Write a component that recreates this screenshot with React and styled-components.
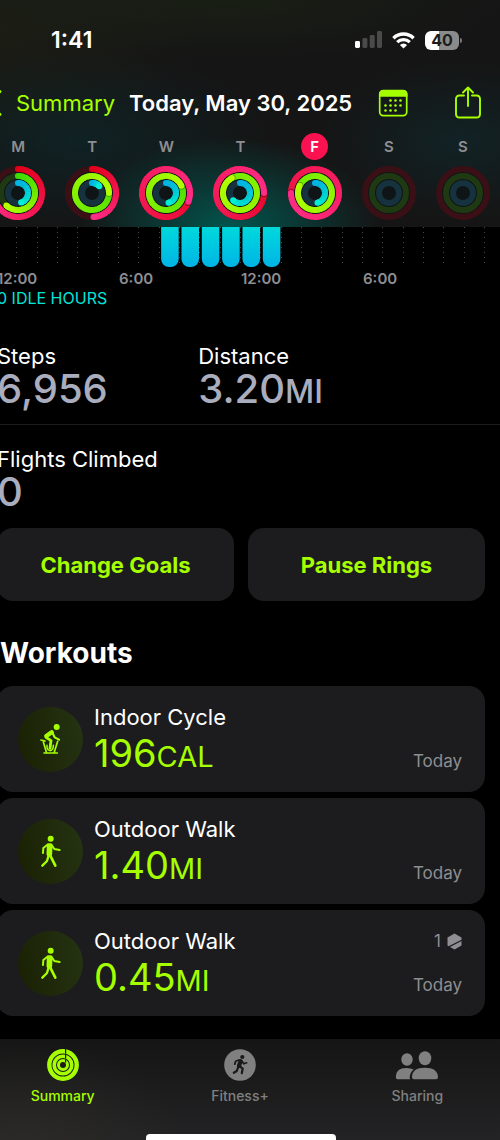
import React from "react";
import styled, { createGlobalStyle } from "styled-components";

const LIME = "#a6ff00";
const GREY = "#8e8e93";

const GlobalStyle = createGlobalStyle`
  *, *::before, *::after { box-sizing: border-box; }
  body {
    margin: 0;
    background: #000;
    color: #fff;
    font-family: Inter, "Liberation Sans", sans-serif;
  }
  button { font: inherit; border: 0; padding: 0; background: none; color: inherit; cursor: pointer; }
  a { color: inherit; text-decoration: none; }
  h1, h2, h3, p, ul, dl, dd { margin: 0; padding: 0; }
  ul { list-style: none; }
  svg { display: block; flex: none; }
`;

const Page = styled.div`
  min-height: 100vh;
  display: flex;
  flex-direction: column;
  overflow: hidden;
`;

const Header = styled.header`
  background:
    radial-gradient(ellipse 150px 90px at 46% 100%, rgba(0, 92, 84, 0.9), rgba(0, 92, 84, 0.4) 55%, transparent),
    radial-gradient(ellipse 190px 90px at 16% 62%, rgba(12, 42, 46, 0.6), transparent),
    radial-gradient(ellipse 140px 80px at 92% 62%, rgba(16, 40, 44, 0.7), transparent),
    radial-gradient(ellipse 280px 60px at 45% 0%, rgba(28, 40, 20, 0.5), transparent),
    radial-gradient(ellipse 200px 120px at 0% 15%, rgba(30, 32, 20, 0.7), transparent),
    #151515;
`;

const StatusBar = styled.div`
  height: 80px;
  display: flex;
  align-items: center;
  justify-content: space-between;
  padding: 0 41px 0 51px;
`;

const Time = styled.time`
  font-size: 23px;
  font-weight: 600;
`;

const StatusIcons = styled.div`
  display: flex;
  align-items: center;
  gap: 10px;
`;

const Battery = styled.div`
  position: relative;
  width: 34px;
  height: 19px;
  border-radius: 6px;
  background: linear-gradient(90deg, #fff 41%, #8b8b8b 41%);
  color: #1c1c1c;
  font-size: 16px;
  font-weight: 700;
  line-height: 19px;
  text-align: center;

  &::after {
    content: "";
    position: absolute;
    left: 35px;
    top: 7px;
    width: 2px;
    height: 5px;
    border-radius: 0 2px 2px 0;
    background: #777;
  }
`;

const NavBar = styled.nav`
  height: 46px;
  display: flex;
  align-items: center;
  padding-right: 18px;
`;

const BackLink = styled.a`
  display: flex;
  align-items: center;
  gap: 14px;
  margin-left: -13px;
  color: ${LIME};
  font-size: 22px;
`;

const Title = styled.h1`
  margin-left: 14px;
  font-size: 22px;
  font-weight: 600;
  white-space: nowrap;
`;

const IconButton = styled.button`
  color: ${LIME};
  margin-left: ${(p) => (p.$push ? "auto" : "26px")};
`;

const Week = styled.ul`
  display: grid;
  grid-template-columns: repeat(7, 1fr);
  margin-left: -19px;
  padding: 7px 0;
`;

const Day = styled.li`
  display: flex;
  flex-direction: column;
  align-items: center;
  gap: 6px;
`;

const DayLetter = styled.span`
  width: 27px;
  height: 27px;
  border-radius: 50%;
  line-height: 27px;
  text-align: center;
  font-size: 15px;
  font-weight: 600;
  color: ${(p) => (p.$today ? "#fff" : GREY)};
  background: ${(p) => (p.$today ? "#fa114f" : "transparent")};
`;

const Content = styled.main`
  margin-left: -3px;
  padding-right: 15px;
`;

const HourLabels = styled.div`
  display: grid;
  grid-template-columns: repeat(4, 1fr);
  font-size: 15px;
  font-weight: 600;
  line-height: 22px;
  color: ${GREY};
`;

const IdleHours = styled.p`
  font-size: 16px;
  line-height: 16px;
  color: #00e5d8;
`;

const Stats = styled.dl`
  display: grid;
  grid-template-columns: 40% 1fr;
  padding: ${(p) => (p.$divided ? "37px 0 15px" : "21px 0 16px")};
  border-bottom: ${(p) => (p.$divided ? "1px solid #1c1c1e" : "0")};
  margin-right: ${(p) => (p.$divided ? "-15px" : "0")};
`;

const StatLabel = styled.dt`
  font-size: 22px;
  line-height: 26px;
`;

const StatValue = styled.dd`
  font-size: 40px;
  font-weight: 500;
  line-height: 40px;
  color: #a9adbd;
`;

const StatUnit = styled.span`
  font-size: 32px;
  line-height: 20px;
`;

const Actions = styled.div`
  display: grid;
  grid-template-columns: 1fr 1fr;
  gap: 14px;
`;

const ActionButton = styled.button`
  height: 73px;
  border-radius: 16px;
  background: #1c1c1e;
  color: ${LIME};
  font-size: 22px;
  font-weight: 700;
`;

const SectionTitle = styled.h2`
  margin: 34px 0 15px 3px;
  font-size: 28px;
  font-weight: 700;
  line-height: 36px;
`;

const WorkoutList = styled.ul`
  display: grid;
  gap: 6px;
`;

const WorkoutCard = styled.a`
  height: 106px;
  display: flex;
  align-items: center;
  gap: 11px;
  padding: 0 23px 0 21px;
  border-radius: 16px;
  background: #1c1c1e;
`;

const WorkoutIcon = styled.span`
  width: 65px;
  height: 65px;
  flex: none;
  display: grid;
  place-items: center;
  border-radius: 50%;
  background: linear-gradient(80deg, #1a2003, #253413);
  color: ${LIME};
`;

const WorkoutText = styled.div`
  flex: 1;
`;

const WorkoutName = styled.h3`
  font-size: 22px;
  font-weight: 400;
  line-height: 28px;
`;

const WorkoutValue = styled.p`
  font-size: 38px;
  line-height: 44px;
  color: ${LIME};
`;

const WorkoutUnit = styled.span`
  font-size: 29px;
  line-height: 20px;
`;

const WorkoutMeta = styled.div`
  height: 64px;
  display: flex;
  flex-direction: column;
  align-items: flex-end;
  justify-content: space-between;
  font-size: 17px;
  line-height: 20px;
  color: ${GREY};
`;

const Award = styled.span`
  display: flex;
  align-items: center;
  gap: 6px;
`;

const TabBar = styled.footer`
  margin-top: 23px;
  padding-top: 10px;
  background:
    radial-gradient(ellipse 160px 100px at 5% 100%, rgba(48, 46, 40, 0.6), transparent),
    linear-gradient(#151515, #232325);
`;

const Tabs = styled.nav`
  display: grid;
  grid-template-columns: repeat(3, 1fr);
  margin: 0 -6px 30px -26px;
`;

const Tab = styled.a`
  display: flex;
  flex-direction: column;
  align-items: center;
  gap: 7px;
  font-size: 14px;
  font-weight: 500;
  line-height: 16px;
  color: ${(p) => (p.$active ? LIME : "#808080")};
`;

const IndicatorArea = styled.div`
  padding-right: 18px;
`;

const HomeIndicator = styled.div`
  width: 190px;
  height: 6px;
  margin: 0 auto;
  border-radius: 4px 4px 0 0;
  background: #fff;
`;

const RING_TYPES = [
  { radius: 24, from: [226, 0, 24], to: [255, 45, 135], track: "#3a1016" },
  { radius: 17, from: [60, 220, 0], to: [180, 255, 0], track: "#1f3a12" },
  { radius: 10, from: [0, 180, 228], to: [0, 240, 215], track: "#15323e" },
];

const pointAt = (radius, turn) => {
  const a = turn * 2 * Math.PI;
  return [27 + radius * Math.sin(a), 27 - radius * Math.cos(a)];
};

const mix = (from, to, t) =>
  `rgb(${from.map((c, i) => Math.round(c + (to[i] - c) * t)).join(",")})`;

function Ring({ type, value }) {
  const { radius, from, to, track } = type;
  const start = Math.max(0, value - 1);
  const steps = 48;
  const arcs = [];
  for (let i = 0; i < steps && value > 0; i += 1) {
    const a = start + ((value - start) * i) / steps;
    const b = start + ((value - start) * (i + 1)) / steps;
    const [x1, y1] = pointAt(radius, a);
    const [x2, y2] = pointAt(radius, b + (i < steps - 1 ? 0.006 : 0));
    arcs.push(
      <path
        key={i}
        d={`M${x1} ${y1}A${radius} ${radius} 0 0 1 ${x2} ${y2}`}
        stroke={mix(from, to, b / value)}
        strokeWidth="6"
        fill="none"
      />
    );
  }
  const [hx, hy] = pointAt(radius, value);
  const [sx, sy] = pointAt(radius, value + 0.008);
  return (
    <g>
      <circle cx="27" cy="27" r={radius} stroke={track} strokeWidth="6" fill="none" />
      {value > 0 && value < 1 && <circle cx="27" cy={27 - radius} r="3" fill={mix(from, to, 0)} />}
      {arcs}
      {value > 1 && <circle cx={sx} cy={sy} r="3" fill="rgba(0,0,0,0.35)" />}
      {value > 0 && <circle cx={hx} cy={hy} r="3" fill={mix(from, to, 1)} />}
    </g>
  );
}

function Rings({ values }) {
  return (
    <svg width="54" height="54" viewBox="0 0 54 54" overflow="visible" aria-hidden="true">
      <circle cx="27" cy="27" r="26" fill="#0f1516" />
      {RING_TYPES.map((type, i) => (
        <Ring key={type.radius} type={type} value={values[i]} />
      ))}
    </svg>
  );
}

function HourChart() {
  const slot = 100 / 24;
  return (
    <svg width="100%" height="41" role="img" aria-label="Stand hours">
      <defs>
        <linearGradient id="stand" x1="0" y1="0" x2="0" y2="1">
          <stop offset="0.35" stopColor="#00d8dc" />
          <stop offset="1" stopColor="#00b4e6" />
        </linearGradient>
      </defs>
      {Array.from({ length: 24 }, (_, i) => (
        <line
          key={i}
          x1={`${(i + 1) * slot - 0.1}%`}
          x2={`${(i + 1) * slot - 0.1}%`}
          y1="0"
          y2="38"
          stroke="#48484a"
          strokeDasharray="1 4"
          shapeRendering="crispEdges"
        />
      ))}
      {[8, 9, 10, 11, 12, 13].map((h) => (
        <rect key={h} x={`${h * slot + 0.3}%`} y="-20" width="3.6%" height="60" rx="8" fill="url(#stand)" />
      ))}
    </svg>
  );
}

const SignalIcon = () => (
  <svg width="27" height="18" viewBox="0 0 27 18" aria-hidden="true">
    <rect x="0" y="10" width="5" height="7" rx="1.4" fill="#fff" />
    <rect x="7.4" y="7" width="5" height="10" rx="1.4" fill="#4a4a4a" />
    <rect x="14.7" y="4" width="5" height="13" rx="1.4" fill="#4a4a4a" />
    <rect x="22" y="0" width="5" height="17" rx="1.4" fill="#4a4a4a" />
  </svg>
);

const WifiIcon = () => (
  <svg width="23" height="17" viewBox="0 0 23 17" fill="none" stroke="#fff" aria-hidden="true">
    <path d="M1.4 6.2a14.4 14.4 0 0 1 20.2 0" strokeWidth="3.4" />
    <path d="M5.2 10.2a9 9 0 0 1 12.6 0" strokeWidth="3.2" />
    <path d="M11.5 16.6 7.9 13a5 5 0 0 1 7.2 0Z" fill="#fff" stroke="none" />
  </svg>
);

const ChevronIcon = () => (
  <svg width="15" height="28" viewBox="0 0 15 28" fill="none" stroke="currentColor" strokeWidth="2.8" strokeLinecap="round" strokeLinejoin="round" aria-hidden="true">
    <path d="M13 2.5 1.8 14 13 25.5" />
  </svg>
);

const CALENDAR_DOTS = [
  [12.5, 11.5], [17.5, 11.5], [22.5, 11.5],
  [7.5, 16.5], [12.5, 16.5], [17.5, 16.5], [22.5, 16.5],
  [7.5, 21.5], [12.5, 21.5], [17.5, 21.5],
];

const CalendarIcon = () => (
  <svg width="30" height="28" viewBox="0 0 30 28" aria-hidden="true">
    <rect x="1.7" y="1.7" width="27" height="25" rx="3.6" fill="none" stroke="currentColor" strokeWidth="1.7" />
    <path d="M1 5.2Q1 1 5.2 1h20Q29.4 1 29.4 5.2V7.8H1Z" fill="currentColor" />
    {CALENDAR_DOTS.map(([x, y]) => (
      <circle key={`${x}-${y}`} cx={x} cy={y} r="1.3" fill="currentColor" />
    ))}
  </svg>
);

const ShareIcon = () => (
  <svg width="28" height="34" viewBox="0 0 28 34" fill="none" stroke="currentColor" strokeWidth="1.9" strokeLinecap="round" strokeLinejoin="round" aria-hidden="true">
    <path d="M10 9.5H5.5Q2 9.500 2 13v15q0 3.500 3.500 3.500h17Q26 31.500 26 28V13q0-3.500-3.500-3.500H18" />
    <path d="M14 20V1.500M9 6.500l5-5 5 5" />
  </svg>
);

const CycleIcon = () => (
  <svg width="22" height="32" viewBox="118 127 66 96" fill="none" stroke="currentColor" strokeLinecap="round" strokeLinejoin="round" aria-hidden="true">
    <circle cx="168" cy="139" r="9" fill="currentColor" stroke="none" />
    <path d="M153 155 137 166" strokeWidth="13" />
    <path d="M136 170 151 180 148 203" strokeWidth="8.5" />
    <path d="M155 155 162 170 175 177" strokeWidth="6.5" />
    <path d="M121 178 133 181M128 184 137 214M171 182 161 214M130 217H170" strokeWidth="5" />
    <path d="M139 194Q138 209 149 210Q158 209 158 194" strokeWidth="4.5" />
  </svg>
);

const WalkIcon = () => (
  <svg width="22" height="33" viewBox="121 462 66 99" fill="none" stroke="currentColor" strokeLinecap="round" strokeLinejoin="round" aria-hidden="true">
    <circle cx="153" cy="473" r="9" fill="currentColor" stroke="none" />
    <path d="M150 495 149 518" strokeWidth="17" />
    <path d="M145 490 131 501 130 516" strokeWidth="6" />
    <path d="M155 491 164 504 180 507" strokeWidth="6" />
    <path d="M150 520 167 554" strokeWidth="8" />
    <path d="M146 526 142 540 128 554" strokeWidth="7" />
  </svg>
);

const AwardIcon = () => (
  <svg width="15" height="17" viewBox="0 0 15 17" fill="currentColor" aria-hidden="true">
    <path d="M7.5 0.5 14.5 4.5V6.8L1.6 13.2 0.5 12.5V4.5ZM14.5 8V12.5L7.5 16.5 3 14Z" />
  </svg>
);

const SummaryIcon = () => (
  <svg width="32" height="32" viewBox="0 0 32 32" fill="none" stroke="currentColor" aria-hidden="true">
    <circle cx="16" cy="16" r="13.7" strokeWidth="4.4" />
    <circle cx="16" cy="16" r="8.8" strokeWidth="3.6" />
    <circle cx="16" cy="16" r="4.5" strokeWidth="3" />
    <path d="M18.6 0V4.800M18.6 5.600V9.400M18.6 10.600V13.600" stroke="#1b1b1b" strokeWidth="1.2" />
  </svg>
);

const FitnessIcon = () => (
  <svg width="32" height="32" viewBox="0 0 32 32" fill="none" aria-hidden="true">
    <circle cx="16" cy="16" r="15.8" fill="currentColor" />
    <g stroke="#191919" strokeLinecap="round" strokeLinejoin="round">
      <circle cx="18.3" cy="8" r="2.1" fill="#191919" stroke="none" />
      <path d="M16.6 12.2 15 16.8" strokeWidth="4.2" />
      <path d="M14.8 11 11.6 12.2 10.8 15.2" strokeWidth="1.7" />
      <path d="M18 12.2 19.8 14.8 22.6 13.8" strokeWidth="1.7" />
      <path d="M15.8 17.4 18.7 19.6 17.8 24.2" strokeWidth="2.2" />
      <path d="M14 18.5 12.8 22 9.8 23.8" strokeWidth="2.2" />
    </g>
  </svg>
);

const SharingIcon = () => (
  <svg width="44" height="32" viewBox="0 0 44 32" fill="currentColor" aria-hidden="true">
    <ellipse cx="12" cy="10.5" rx="5.7" ry="6.2" />
    <ellipse cx="30" cy="9.3" rx="6.3" ry="7" />
    <path d="M0.8 28Q0.8 19 11.5 19Q15.8 19 18.6 20.6Q14.7 24 14.7 28.5Q14.7 29.8 15.2 30.3H2.6Q0.8 30.3 0.8 28Z" />
    <path d="M17 28Q17.2 18.7 29.8 18.7Q42.5 18.7 43 28Q43 30.3 41 30.3H19Q17 30.3 17 28Z" />
  </svg>
);

const DAYS = [
  { letter: "M", values: [0.72, 0.62, 0.45] },
  { letter: "T", values: [0.49, 1.25, 0.13] },
  { letter: "W", values: [1.31, 1.18, 0.46] },
  { letter: "T", values: [1.25, 1.92, 0.62] },
  { letter: "F", values: [1.75, 1.82, 0.46], today: true },
  { letter: "S", values: [0, 0, 0] },
  { letter: "S", values: [0, 0, 0] },
];

const WORKOUTS = [
  { name: "Indoor Cycle", value: "196", unit: "CAL", Icon: CycleIcon },
  { name: "Outdoor Walk", value: "1.40", unit: "MI", Icon: WalkIcon },
  { name: "Outdoor Walk", value: "0.45", unit: "MI", Icon: WalkIcon, awards: 1 },
];

export default function App() {
  return (
    <Page>
      <GlobalStyle />
      <Header>
        <StatusBar>
          <Time>1:41</Time>
          <StatusIcons>
            <SignalIcon />
            <WifiIcon />
            <Battery>40</Battery>
          </StatusIcons>
        </StatusBar>
        <NavBar>
          <BackLink href="#summary">
            <ChevronIcon />
            Summary
          </BackLink>
          <Title>Today, May 30, 2025</Title>
          <IconButton aria-label="Calendar">
            <CalendarIcon />
          </IconButton>
          <IconButton $push aria-label="Share">
            <ShareIcon />
          </IconButton>
        </NavBar>
        <Week>
          {DAYS.map((day, i) => (
            <Day key={i}>
              <DayLetter $today={day.today}>{day.letter}</DayLetter>
              <Rings values={day.values} />
            </Day>
          ))}
        </Week>
      </Header>

      <Content>
        <HourChart />
        <HourLabels>
          <span>12:00</span>
          <span>6:00</span>
          <span>12:00</span>
          <span>6:00</span>
        </HourLabels>
        <IdleHours>0 IDLE HOURS</IdleHours>

        <Stats $divided>
          <div>
            <StatLabel>Steps</StatLabel>
            <StatValue>6,956</StatValue>
          </div>
          <div>
            <StatLabel>Distance</StatLabel>
            <StatValue>
              3.20<StatUnit>MI</StatUnit>
            </StatValue>
          </div>
        </Stats>
        <Stats>
          <div>
            <StatLabel>Flights Climbed</StatLabel>
            <StatValue>0</StatValue>
          </div>
        </Stats>

        <Actions>
          <ActionButton>Change Goals</ActionButton>
          <ActionButton>Pause Rings</ActionButton>
        </Actions>

        <SectionTitle>Workouts</SectionTitle>
        <WorkoutList>
          {WORKOUTS.map(({ name, value, unit, Icon, awards }, i) => (
            <li key={i}>
              <WorkoutCard href={`#workout-${i + 1}`}>
                <WorkoutIcon>
                  <Icon />
                </WorkoutIcon>
                <WorkoutText>
                  <WorkoutName>{name}</WorkoutName>
                  <WorkoutValue>
                    {value}
                    <WorkoutUnit>{unit}</WorkoutUnit>
                  </WorkoutValue>
                </WorkoutText>
                <WorkoutMeta>
                  <Award>
                    {awards && (
                      <>
                        {awards}
                        <AwardIcon />
                      </>
                    )}
                  </Award>
                  <span>Today</span>
                </WorkoutMeta>
              </WorkoutCard>
            </li>
          ))}
        </WorkoutList>
      </Content>

      <TabBar>
        <Tabs>
          <Tab href="#summary" $active>
            <SummaryIcon />
            Summary
          </Tab>
          <Tab href="#fitness">
            <FitnessIcon />
            Fitness+
          </Tab>
          <Tab href="#sharing">
            <SharingIcon />
            Sharing
          </Tab>
        </Tabs>
        <IndicatorArea>
          <HomeIndicator />
        </IndicatorArea>
      </TabBar>
    </Page>
  );
}
